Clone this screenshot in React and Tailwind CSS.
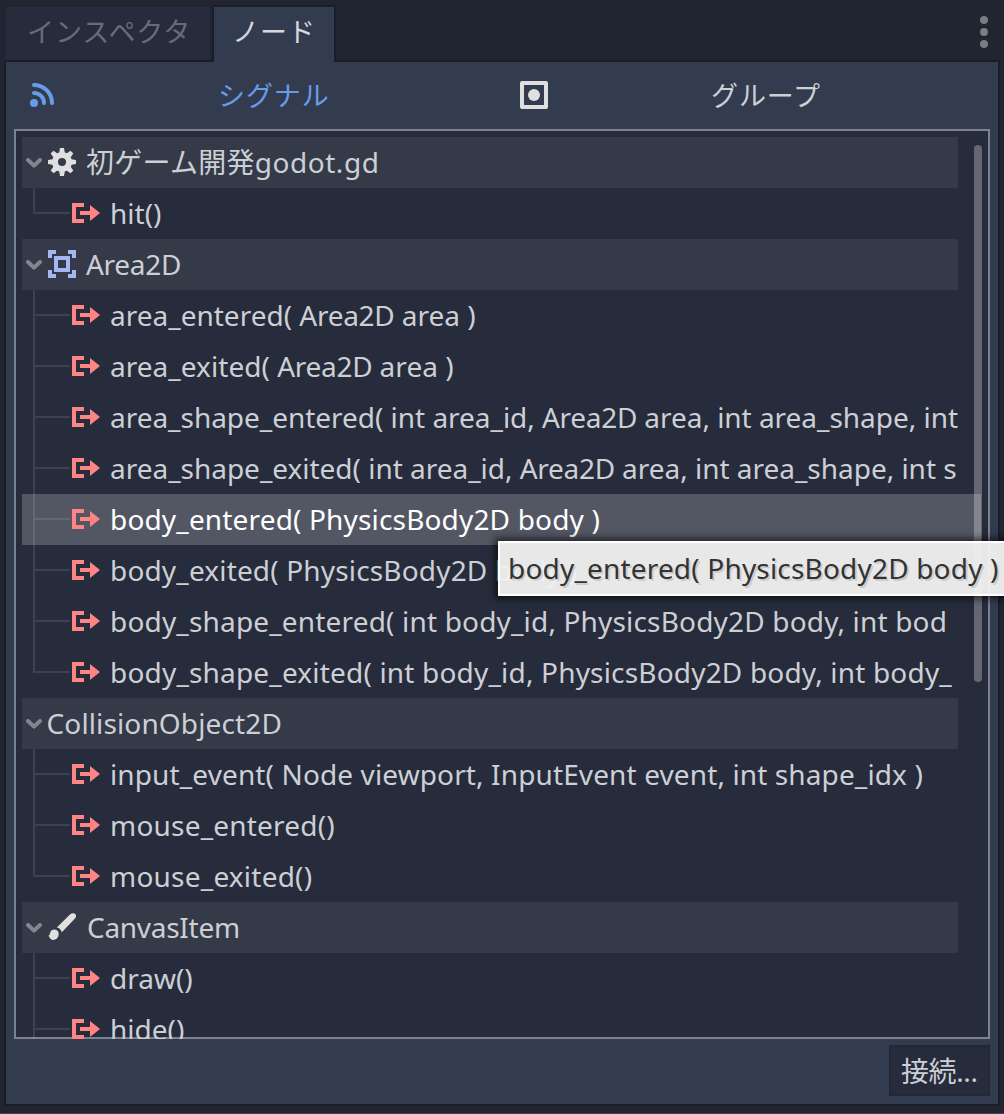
const rows = [
  { head: true, icon: 'gear', text: '初ゲーム開発godot.gd' },
  { text: 'hit()', last: true },
  { head: true, icon: 'area', text: 'Area2D' },
  { text: 'area_entered( Area2D area )' },
  { text: 'area_exited( Area2D area )', fit: 'tracking-[0.04px]' },
  { text: 'area_shape_entered( int area_id, Area2D area, int area_shape, int', fit: 'tracking-[-0.03px]' },
  { text: 'area_shape_exited( int area_id, Area2D area, int area_shape, int s', fit: 'tracking-[-0.02px]' },
  { text: 'body_entered( PhysicsBody2D body )', selected: true, fit: 'tracking-[0.16px]' },
  { text: 'body_exited( PhysicsBody2D body )', fit: 'tracking-[0.16px]' },
  { text: 'body_shape_entered( int body_id, PhysicsBody2D body, int bod', fit: 'tracking-[0.17px]' },
  { text: 'body_shape_exited( int body_id, PhysicsBody2D body, int body_', last: true, fit: 'tracking-[0.18px]' },
  { head: true, text: 'CollisionObject2D' },
  { text: 'input_event( Node viewport, InputEvent event, int shape_idx )', fit: 'tracking-[0.12px]' },
  { text: 'mouse_entered()', fit: 'tracking-[0.2px]' },
  { text: 'mouse_exited()', last: true, fit: 'tracking-[0.22px]' },
  { head: true, icon: 'brush', text: 'CanvasItem', fit: 'ml-[1px] tracking-[-0.28px]' },
  { text: 'draw()' },
  { text: 'hide()' },
];

function SignalIcon() {
  return (
    <svg className="mt-[15px] h-5 w-7 shrink-0" viewBox="0 0 28 20" fill="#ff8585">
      <path d="M12 0H0V20H12V16H4V4H12Z" />
      <path d="M8 8H18V2L28 10L18 18V12H8Z" />
    </svg>
  );
}

function Chevron() {
  return (
    <svg className="mt-[21px] ml-1 h-[10px] w-4 shrink-0" viewBox="0 0 16 10" fill="none" stroke="#82868f" strokeWidth="4" strokeLinecap="round" strokeLinejoin="round">
      <path d="M2 2L8 7.6L14 2" />
    </svg>
  );
}

function GearIcon() {
  const teeth = [0, 45, 90, 135];
  return (
    <svg className="h-7 w-7" viewBox="0 0 28 28">
      <circle cx="14" cy="14" r="7" fill="none" stroke="#e0e0e0" strokeWidth="6" />
      <g fill="#e0e0e0">
        {teeth.map((a) => (
          <g key={a} transform={`rotate(${a} 14 14)`}>
            <path d="M12 0H16L17 6H11Z" />
            <path d="M12 28H16L17 22H11Z" />
          </g>
        ))}
      </g>
    </svg>
  );
}

function AreaIcon() {
  return (
    <svg className="h-7 w-7" viewBox="0 0 28 28" fill="#a5b7f3">
      <path d="M0 0H8V4H4V8H0ZM20 0H28V8H24V4H20ZM0 20H4V24H8V28H0ZM24 20H28V28H20V24H24Z" />
      <path fillRule="evenodd" d="M6 6H22V22H6ZM10 10V18H18V10Z" />
    </svg>
  );
}

function BrushIcon() {
  return (
    <svg className="h-7 w-7" viewBox="0 0 28 28" fill="#e0e0e0">
      <path d="M22.2 1.3C24.4 -0.6 27 0 27.8 1.8C28.3 3.2 28 4.4 27 5.5L13.8 19.2C13 16.5 11.5 15 8.8 14.4Z" />
      <path d="M6.2 16.6C9.5 16.8 11 19 10.7 21.6C10.4 25.6 7.2 27.4 4.4 26.9C2.6 26.5 1.5 25 1.2 23.6L0 22.7C2 22.4 1.6 21.3 2.2 19.4C2.9 17.7 4.3 16.6 6.2 16.6Z" />
    </svg>
  );
}

const icons = { gear: GearIcon, area: AreaIcon, brush: BrushIcon };

// Words whose glyph spacing differs from the rest of the label.
const wordFit = {
  Area2D: 'tracking-[-0.3px]',
  '初ゲーム開発': 'tracking-[0.25px]',
  'godot.gd': 'tracking-[0.55px]',
};

function Label({ text }) {
  return text
    .split(/(Area2D|初ゲーム開発|godot\.gd)/)
    .filter(Boolean)
    .map((part, i) => (wordFit[part] ? <span key={i} className={wordFit[part]}>{part}</span> : part));
}

function HeadRow({ row }) {
  const Icon = icons[row.icon];
  return (
    <div className="flex h-[51px] w-[936px] shrink-0 bg-[#343a48]">
      <Chevron />
      {Icon && <div className="mt-[11px] ml-[6px] mr-[10px] w-7 shrink-0"><Icon /></div>}
      <span className={Icon ? row.fit || '' : 'ml-[4.5px] tracking-[0.13px]'}><Label text={row.text} /></span>
    </div>
  );
}

function SignalRow({ row }) {
  return (
    <div className={row.selected ? 'flex h-[51px] w-[959px] shrink-0 bg-[#535763] text-white' : 'flex h-[51px] w-[936px] shrink-0'}>
      <div className="ml-[11px] mr-[2px] flex w-[37px] shrink-0">
        <div className={row.last ? 'h-[26px] w-[2px] bg-white/10' : 'h-[51px] w-[2px] bg-white/10'} />
        <div className="mt-6 h-[2px] w-[35px] bg-white/10" />
      </div>
      <SignalIcon />
      <span className={row.fit ? `ml-[10px] ${row.fit}` : 'ml-[10px]'}><Label text={row.text} /></span>
    </div>
  );
}

export default function App() {
  return (
    <div className="relative flex h-[1114px] w-[1004px] flex-col overflow-hidden border-b border-[#45464f] bg-[#202531] font-['Noto_Sans','Noto_Sans_CJK_JP',sans-serif] text-[28px] text-[#cdcfd5]">
      <div className="flex h-[60px] shrink-0 pl-[6px]">
        <div className="mt-[7px] h-[53px] w-[204px] bg-[#262c3b] pl-[21px] text-[27px] leading-[50px] tracking-[0.95px] whitespace-nowrap text-[#686c77]">インスペクタ</div>
        <div className="z-10 mt-[5px] ml-[2px] h-[57px] w-[124px] border-2 border-b-0 border-[#191e2b] bg-[#333b4f] pl-[18px] text-[27px] leading-[50px] tracking-[1px] whitespace-nowrap text-[#d5d7dc]">ノード</div>
        <div className="mt-4 mr-4 ml-auto flex flex-col gap-1">
          <div className="h-2 w-2 rounded-full bg-[#797c83]" />
          <div className="h-2 w-2 rounded-full bg-[#797c83]" />
          <div className="h-2 w-2 rounded-full bg-[#797c83]" />
        </div>
      </div>

      <div className="ml-1 flex h-[1046px] w-[996px] shrink-0 flex-col border-2 border-[#191e2b] bg-[#333b4f] px-2">
        <div className="flex h-[67px] shrink-0 text-[27px] leading-[68px] tracking-[0.9px] whitespace-nowrap">
          <div className="flex w-[496px] text-[#699ce8]">
            <svg className="mt-[20px] ml-[16px] h-[26px] w-[26px] shrink-0" viewBox="0 0 26 26" fill="none" stroke="#699ce8" strokeWidth="4" strokeLinecap="round">
              <circle cx="4" cy="21" r="4" fill="#699ce8" stroke="none" />
              <path d="M4 11A10 10 0 0 1 14 21M4 3A18 18 0 0 1 22 21" />
            </svg>
            <span className="ml-[162px]">シグナル</span>
          </div>
          <div className="flex">
            <svg className="mt-[19px] ml-[10px] h-7 w-7" viewBox="0 0 28 28">
              <rect x="2" y="2" width="24" height="24" fill="none" stroke="#e0e0e0" strokeWidth="4" strokeLinejoin="round" />
              <circle cx="14" cy="14" r="6" fill="#e0e0e0" />
            </svg>
            <span className="ml-[163px]">グループ</span>
          </div>
        </div>

        <div className="h-[910px] w-[976px] shrink-0 border-2 border-[#7b8292] bg-[#262c3b] pt-[6px] pl-[6px]">
          <div className="flex h-[902px] justify-between overflow-hidden">
            <div className="flex w-[936px] flex-col leading-[51px] whitespace-pre">
              {rows.map((row) => (row.head ? <HeadRow key={row.text} row={row} /> : <SignalRow key={row.text} row={row} />))}
            </div>
            <div className="z-10 mt-2 mr-[6px] h-[537px] w-2 rounded-full bg-white/28" />
          </div>
        </div>

        <div className="mt-[6px] flex justify-end">
          <button className="h-[51px] w-[101px] border-2 border-[#222836] bg-[#262c3b] pl-[10px] text-left leading-[49px] tracking-[-0.4px] whitespace-nowrap">接続...</button>
        </div>
      </div>

      <div className="absolute top-[541px] left-[498px] z-20 h-[55px] w-[520px] border-2 border-white bg-[#f0f0f0]/96 pl-[8px] leading-[50px] tracking-[0.18px] whitespace-pre text-[#333333] shadow-[0_0_7px_3px_rgba(0,0,0,0.6)] [text-shadow:2px_2px_0_rgba(0,0,0,0.12)]">body_entered( PhysicsBody2D body )</div>
    </div>
  );
}
